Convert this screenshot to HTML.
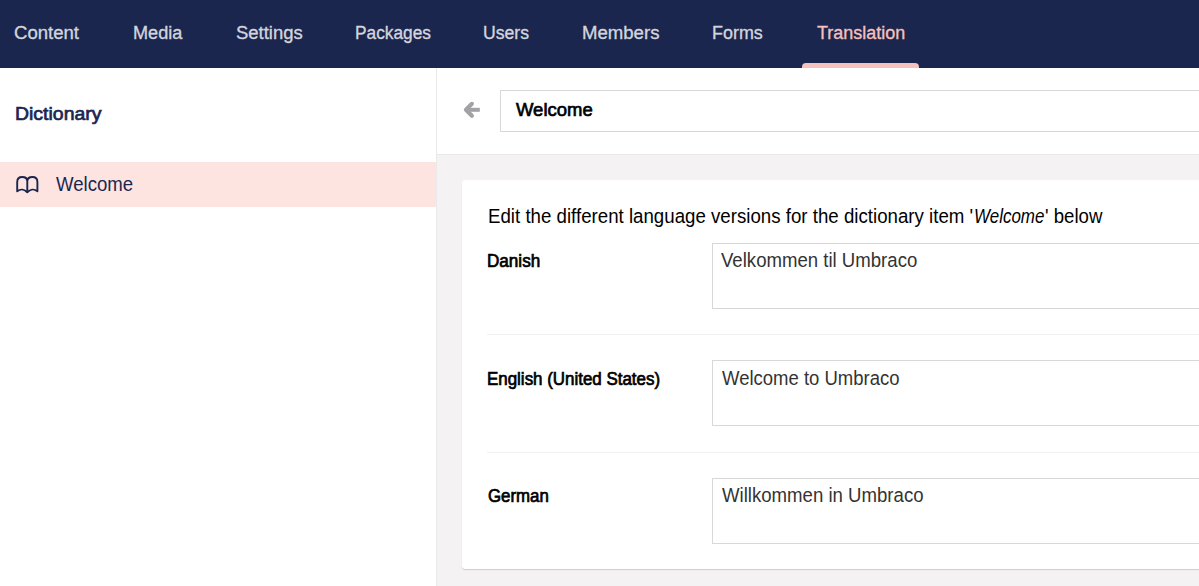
<!DOCTYPE html>
<html><head><meta charset="utf-8"><title>Translation</title><style>
html,body{margin:0;padding:0}
body{width:1199px;height:586px;overflow:hidden;position:relative;background:#fff;font-family:"Liberation Sans",sans-serif}
.t{position:absolute;white-space:nowrap;line-height:1;transform-origin:0 0}
.hdr{position:absolute;left:0;top:0;width:1199px;height:68px;background:#1b264f}
.bar{position:absolute;left:802px;top:63px;width:117px;height:5px;background:#f5c1bc;border-radius:4px 4px 0 0}
.side{position:absolute;left:0;top:68px;width:436px;height:518px;background:#fff;border-right:1px solid #e9e9eb}
.row{position:absolute;left:0;top:162px;width:436px;height:45px;background:#fde4e1}
.ehead{position:absolute;left:437px;top:68px;width:762px;height:86px;background:#fff;border-bottom:1px solid #e9e9eb}
.grey{position:absolute;left:437px;top:155px;width:762px;height:431px;background:#f4f2f3}
.inp{position:absolute;left:500px;top:90px;width:800px;height:40px;border:1px solid #d8d7d9;background:#fff}
.card{position:absolute;left:462px;top:180px;width:900px;height:389px;background:#fff;border-radius:3px;box-shadow:0 1px 1px rgba(0,0,0,.16)}
.ta{position:absolute;left:712px;width:600px;height:64px;border:1px solid #d8d7d9;background:#fff}
.sep{position:absolute;left:487px;width:800px;height:1px;background:#f1f1f2}
.icon{position:absolute}

</style></head><body>
<div class="hdr"></div>
<div class="bar"></div>
<div class="side"></div>
<div class="row"></div>
<svg class="icon" style="left:14px;top:174px" width="26" height="22" viewBox="0 0 26 22"><path d="M3.2 17.3 V8 C3.2 4.5 5.3 3 8.2 3 C11.2 3 13.3 4.5 13.3 7.5 V18.3 M13.3 7.5 C13.3 4.5 15.4 3 18.4 3 C21.3 3 23.4 4.5 23.4 8 V17.3 M3.2 17.3 C6.5 14.6 10.5 15.2 13.3 18.3 C16.1 15.2 20.1 14.6 23.4 17.3" fill="none" stroke="#1b264f" stroke-width="1.9" stroke-linejoin="round" stroke-linecap="round"/></svg>
<div class="ehead"></div>
<div class="grey"></div>
<svg class="icon" style="left:462px;top:99px" width="20" height="21" viewBox="0 0 20 21"><path d="M9.9 4.8 L3.9 10.8 L9.9 16.8" fill="none" stroke="#a2a1a6" stroke-width="4.1" stroke-linecap="round" stroke-linejoin="round"/><path d="M5 10.8 H17.8" fill="none" stroke="#a2a1a6" stroke-width="4"/></svg>
<div class="inp"></div>
<div class="card"></div>
<div class="ta" style="top:243px"></div>
<div class="ta" style="top:360px"></div>
<div class="ta" style="top:478px"></div>
<div class="sep" style="top:334px"></div>
<div class="sep" style="top:452px"></div>

<span class="t" style="left:14.20px;top:22.54px;font-size:19.2px;font-weight:400;-webkit-text-stroke:0.35px currentColor;color:#d3d5dd;transform:scaleX(0.9676)">Content</span>
<span class="t" style="left:132.96px;top:22.54px;font-size:19.2px;font-weight:400;-webkit-text-stroke:0.35px currentColor;color:#d3d5dd;transform:scaleX(0.9442)">Media</span>
<span class="t" style="left:235.64px;top:22.54px;font-size:19.2px;font-weight:400;-webkit-text-stroke:0.35px currentColor;color:#d3d5dd;transform:scaleX(0.9618)">Settings</span>
<span class="t" style="left:354.60px;top:22.54px;font-size:19.2px;font-weight:400;-webkit-text-stroke:0.35px currentColor;color:#d3d5dd;transform:scaleX(0.9012)">Packages</span>
<span class="t" style="left:482.88px;top:22.54px;font-size:19.2px;font-weight:400;-webkit-text-stroke:0.35px currentColor;color:#d3d5dd;transform:scaleX(0.9184)">Users</span>
<span class="t" style="left:581.53px;top:22.54px;font-size:19.2px;font-weight:400;-webkit-text-stroke:0.35px currentColor;color:#d3d5dd;transform:scaleX(0.9684)">Members</span>
<span class="t" style="left:711.57px;top:22.54px;font-size:19.2px;font-weight:400;-webkit-text-stroke:0.35px currentColor;color:#d3d5dd;transform:scaleX(0.9340)">Forms</span>
<span class="t" style="left:816.70px;top:22.54px;font-size:19.2px;font-weight:400;-webkit-text-stroke:0.35px currentColor;color:#f5c1bc;transform:scaleX(0.9362)">Translation</span>
<span class="t" style="left:14.78px;top:103.71px;font-size:19px;font-weight:400;-webkit-text-stroke:0.7px currentColor;color:#1b264f;transform:scaleX(1.0238)">Dictionary</span>
<span class="t" style="left:56.30px;top:175.46px;font-size:19.3px;font-weight:400;color:#1b264f;transform:scaleX(0.9646)">Welcome</span>
<span class="t" style="left:515.97px;top:99.71px;font-size:19px;font-weight:400;-webkit-text-stroke:0.7px currentColor;color:#000;transform:scaleX(0.9725)">Welcome</span>
<span class="t" style="left:487.73px;top:207.46px;font-size:19.3px;font-weight:400;color:#000;transform:scaleX(0.9691)">Edit the different language versions for the dictionary item '</span>
<span class="t" style="left:973.92px;top:207.46px;font-size:19.3px;font-weight:400;color:#000;transform:scaleX(0.8797)"><i>Welcome</i></span>
<span class="t" style="left:1045.03px;top:207.46px;font-size:19.3px;font-weight:400;color:#000;transform:scaleX(0.9661)">' below</span>
<span class="t" style="left:487.13px;top:252.91px;font-size:17.7px;font-weight:400;-webkit-text-stroke:0.7px currentColor;color:#000;transform:scaleX(0.9667)">Danish</span>
<span class="t" style="left:721.00px;top:250.56px;font-size:19.3px;font-weight:400;color:#333;transform:scaleX(0.9640)">Velkommen til Umbraco</span>
<span class="t" style="left:487.04px;top:371.21px;font-size:17.7px;font-weight:400;-webkit-text-stroke:0.7px currentColor;color:#000;transform:scaleX(0.9567)">English (United States)</span>
<span class="t" style="left:721.80px;top:368.76px;font-size:19.3px;font-weight:400;color:#333;transform:scaleX(0.9595)">Welcome to Umbraco</span>
<span class="t" style="left:488.00px;top:488.21px;font-size:17.7px;font-weight:400;-webkit-text-stroke:0.7px currentColor;color:#000;transform:scaleX(0.9524)">German</span>
<span class="t" style="left:721.80px;top:485.66px;font-size:19.3px;font-weight:400;color:#333;transform:scaleX(0.9646)">Willkommen in Umbraco</span>
</body></html>
